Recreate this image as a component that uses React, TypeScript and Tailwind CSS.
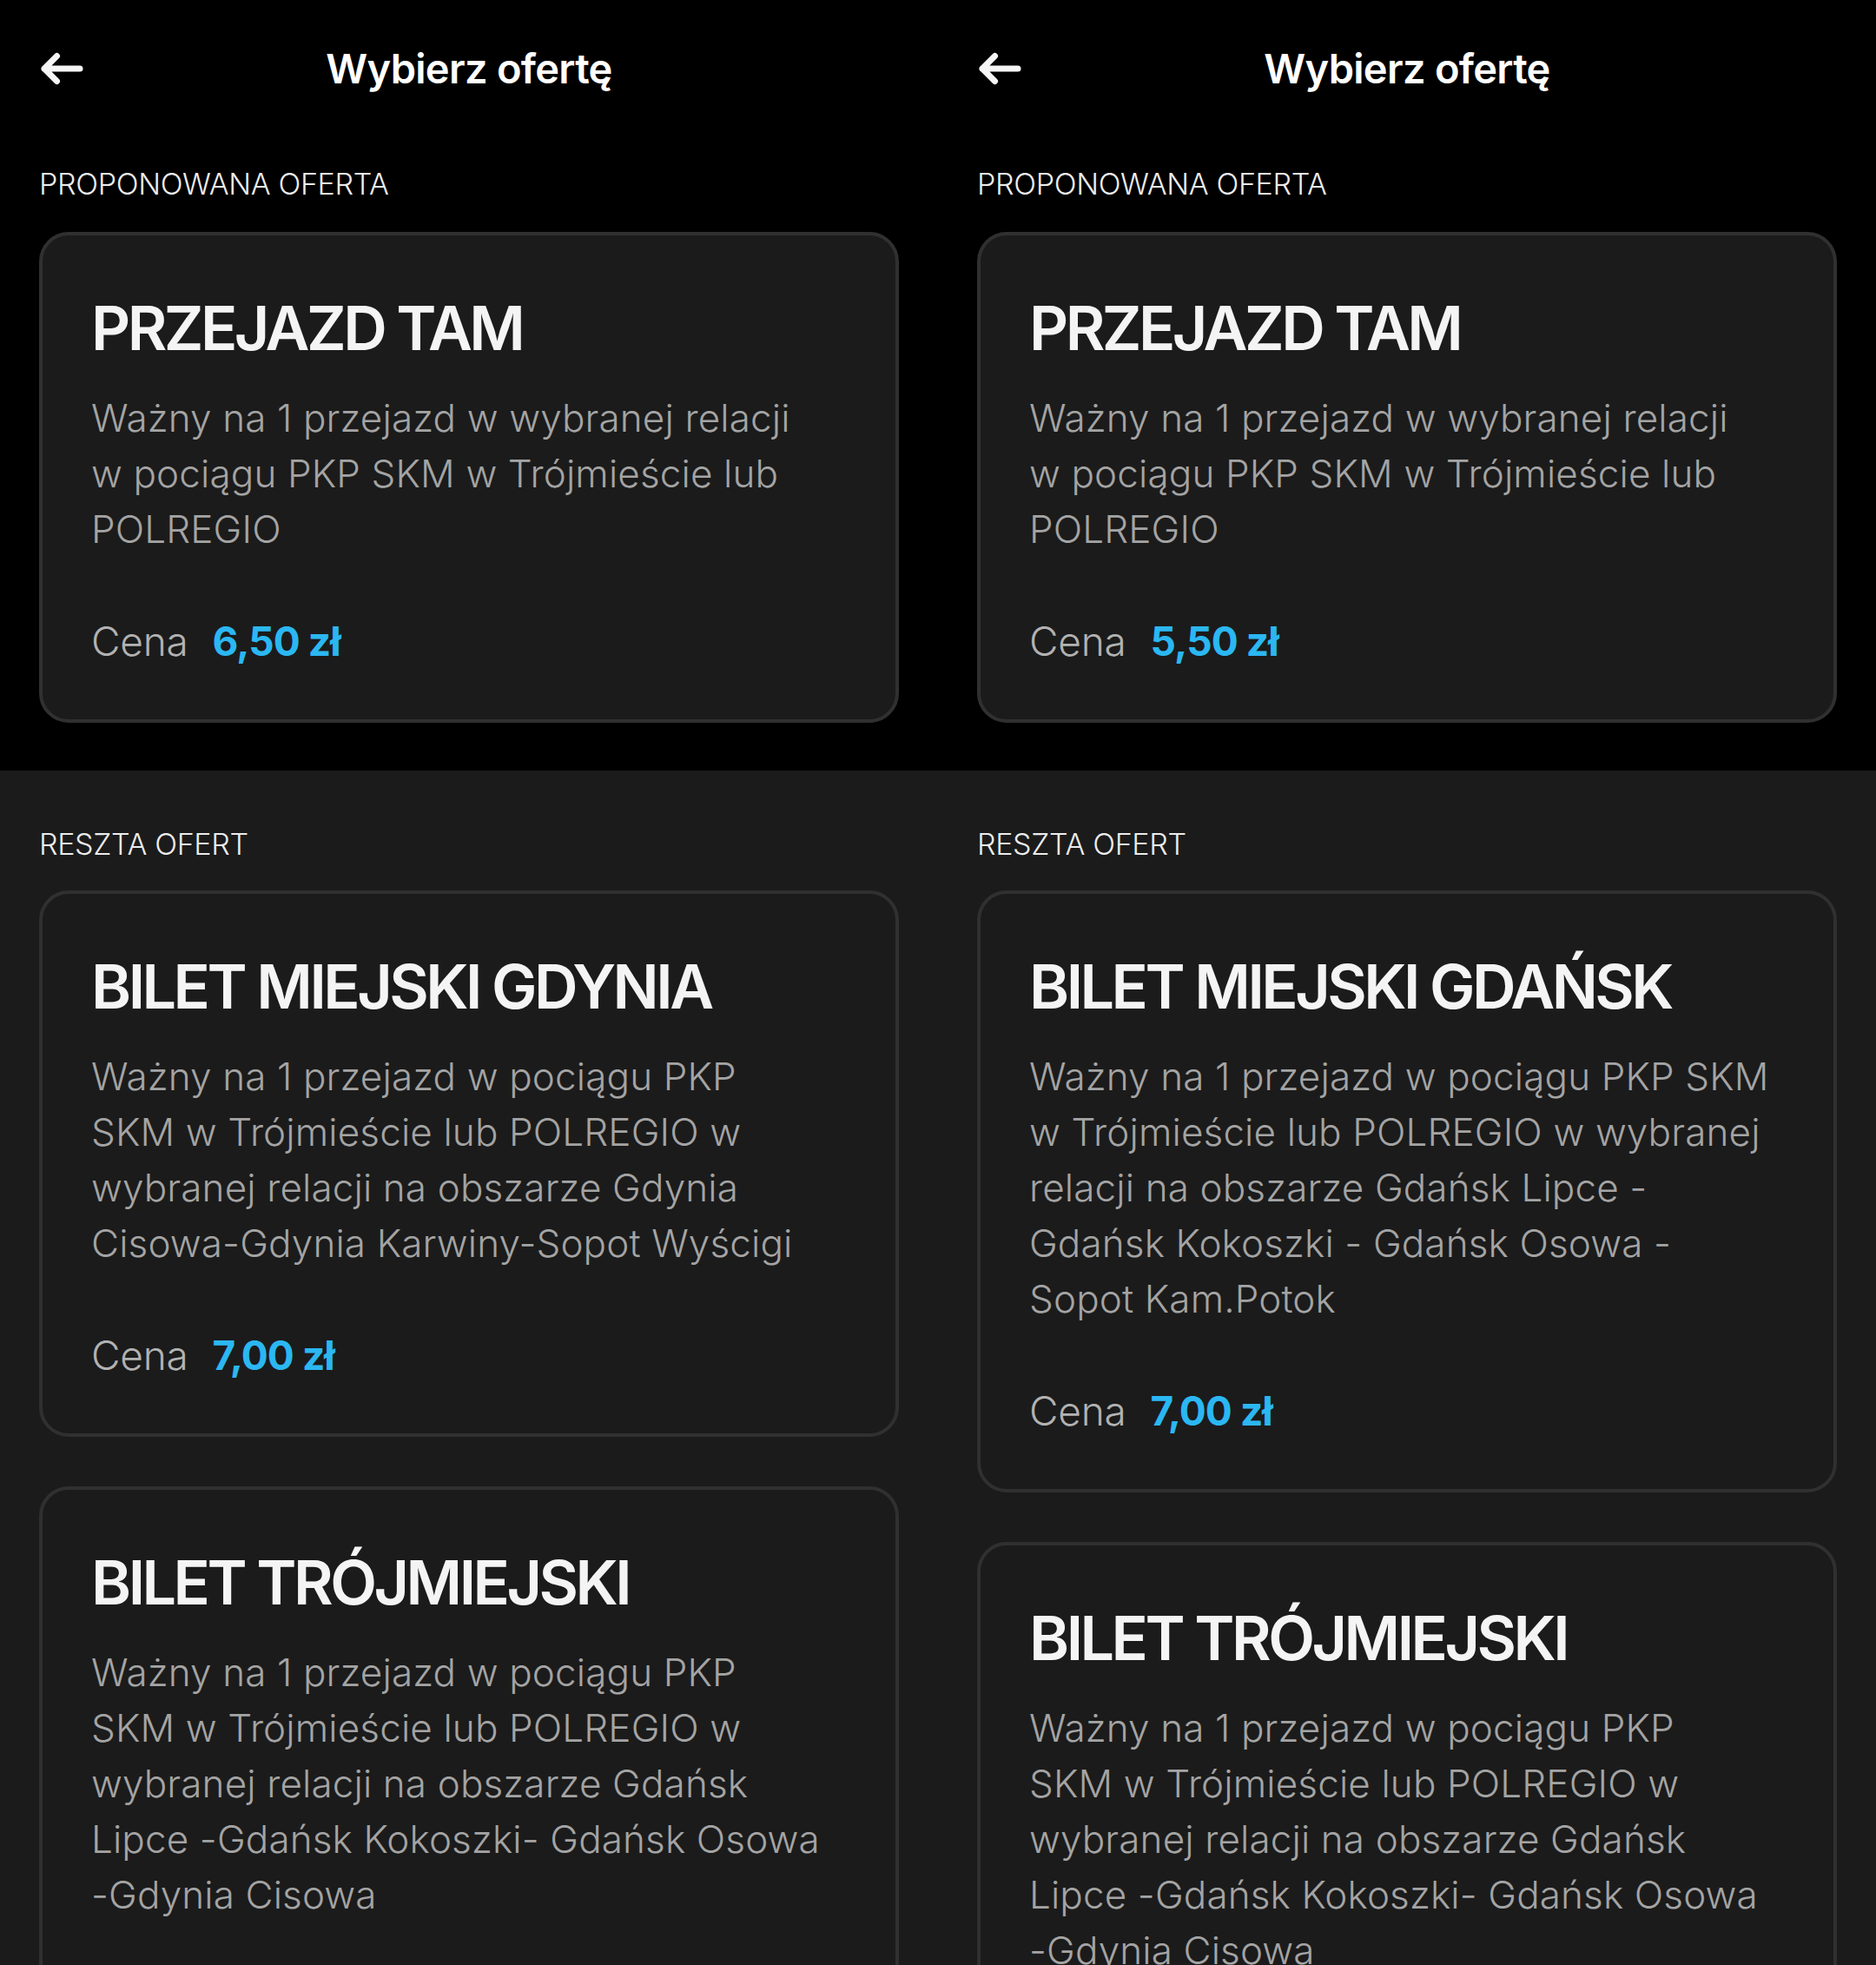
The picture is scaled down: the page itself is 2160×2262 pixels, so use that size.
import { FC } from "react";

interface Offer {
  title: string;
  lines: string[];
  price: string;
}

interface PanelProps {
  featured: Offer;
  others: Offer[];
}

const BackArrow: FC = () => (
  <svg width="52" height="40" viewBox="0 0 52 40" fill="none">
    <path
      d="M5 20H46M19.5 5.5L5 20L19.5 34.5"
      stroke="#f5f5f5"
      strokeWidth="7"
      strokeLinecap="round"
      strokeLinejoin="round"
    />
  </svg>
);

const OfferCard: FC<{ offer: Offer }> = ({ offer }) => (
  <div className="rounded-[34px] border-4 border-[#303030] bg-[#1b1b1b] px-[56px] pt-[62px] pb-[58px]">
    <h2 className="text-[70px] font-semibold leading-[90px] tracking-[-0.05em] text-[#f4f4f4] whitespace-nowrap">
      {offer.title}
    </h2>
    <p className="mt-[26px] text-[44px] font-light leading-[64px] tracking-[0.003em] text-[#a4a4a4]">
      {offer.lines.map((line) => (
        <span key={line} className="block whitespace-nowrap">
          {line}
        </span>
      ))}
    </p>
    <div className="mt-[65px] flex items-baseline gap-[28px] text-[46px] leading-[64px]">
      <span className="font-light tracking-[-0.005em] text-[#b2b2b2]">Cena</span>
      <span className="font-bold tracking-[-0.02em] text-[#2bb7f2]">{offer.price}</span>
    </div>
  </div>
);

const SectionLabel: FC<{ children: string }> = ({ children }) => (
  <p className="text-[34px] font-light leading-[44px] tracking-[-0.01em] text-[#ececec]">
    {children}
  </p>
);

const Panel: FC<PanelProps> = ({ featured, others }) => (
  <div className="flex w-[1080px] shrink-0 flex-col">
    <div className="bg-black px-[45px] pb-[55px]">
      <header className="grid h-[158px] grid-cols-[1fr_auto_1fr] items-center">
        <button className="flex w-fit items-center pl-[1px]">
          <BackArrow />
        </button>
        <h1 className="text-[47px] font-semibold tracking-[-0.015em] text-white">
          Wybierz ofertę
        </h1>
        <div />
      </header>
      <div className="mt-[32px]">
        <SectionLabel>PROPONOWANA OFERTA</SectionLabel>
      </div>
      <div className="mt-[33px]">
        <OfferCard offer={featured} />
      </div>
    </div>

    <div className="flex-1 bg-[#1b1b1b] px-[45px] pt-[63px]">
      <SectionLabel>RESZTA OFERT</SectionLabel>
      <div className="mt-[31px] flex flex-col gap-[57px]">
        {others.map((offer) => (
          <OfferCard key={offer.title} offer={offer} />
        ))}
      </div>
    </div>
  </div>
);

const trojmiejski: Offer = {
  title: "BILET TRÓJMIEJSKI",
  lines: [
    "Ważny na 1 przejazd w pociągu PKP",
    "SKM w Trójmieście lub POLREGIO w",
    "wybranej relacji na obszarze Gdańsk",
    "Lipce -Gdańsk Kokoszki- Gdańsk Osowa",
    "-Gdynia Cisowa",
  ],
  price: "9,50 zł",
};

const left: PanelProps = {
  featured: {
    title: "PRZEJAZD TAM",
    lines: [
      "Ważny na 1 przejazd w wybranej relacji",
      "w pociągu PKP SKM w Trójmieście lub",
      "POLREGIO",
    ],
    price: "6,50 zł",
  },
  others: [
    {
      title: "BILET MIEJSKI GDYNIA",
      lines: [
        "Ważny na 1 przejazd w pociągu PKP",
        "SKM w Trójmieście lub POLREGIO w",
        "wybranej relacji na obszarze Gdynia",
        "Cisowa-Gdynia Karwiny-Sopot Wyścigi",
      ],
      price: "7,00 zł",
    },
    trojmiejski,
  ],
};

const right: PanelProps = {
  featured: {
    title: "PRZEJAZD TAM",
    lines: [
      "Ważny na 1 przejazd w wybranej relacji",
      "w pociągu PKP SKM w Trójmieście lub",
      "POLREGIO",
    ],
    price: "5,50 zł",
  },
  others: [
    {
      title: "BILET MIEJSKI GDAŃSK",
      lines: [
        "Ważny na 1 przejazd w pociągu PKP SKM",
        "w Trójmieście lub POLREGIO w wybranej",
        "relacji na obszarze Gdańsk Lipce -",
        "Gdańsk Kokoszki - Gdańsk Osowa -",
        "Sopot Kam.Potok",
      ],
      price: "7,00 zł",
    },
    trojmiejski,
  ],
};

export default function App() {
  return (
    <div className="flex h-[2262px] w-[2160px] overflow-hidden bg-[#1b1b1b] font-[Inter,sans-serif] antialiased">
      <Panel {...left} />
      <Panel {...right} />
    </div>
  );
}
